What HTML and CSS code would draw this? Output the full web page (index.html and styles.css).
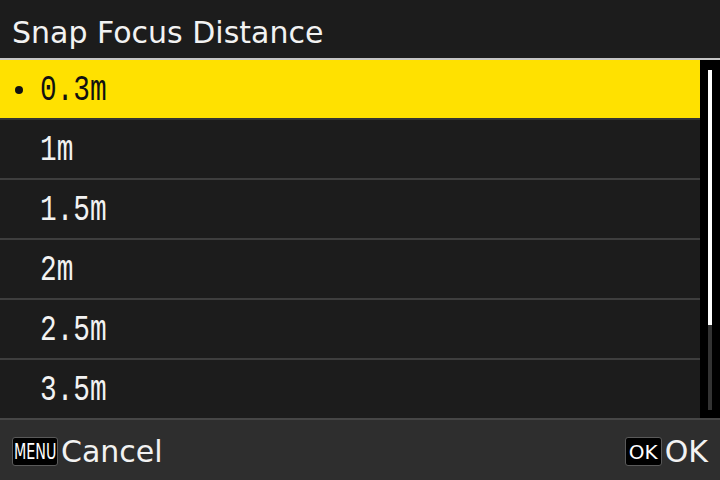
FILE: index.html
```html
<!DOCTYPE html>
<html lang="en">
<head>
  <meta charset="UTF-8">
  <meta name="viewport" content="width=device-width, initial-scale=1.0">
  <title>Snap Focus Distance</title>
  <link rel="stylesheet" href="styles.css">
</head>
<body>
  <div class="screen">
    <div class="title">Snap Focus Distance</div>

    <div class="menu-body">
      <ul class="options">
        <li class="option selected"><span class="dot"></span><span class="value">0.3m</span></li>
        <li class="option"><span class="value">1m</span></li>
        <li class="option"><span class="value">1.5m</span></li>
        <li class="option"><span class="value">2m</span></li>
        <li class="option"><span class="value">2.5m</span></li>
        <li class="option"><span class="value">3.5m</span></li>
      </ul>
      <div class="scrollbar">
        <div class="track">
          <div class="thumb"></div>
        </div>
      </div>
    </div>

    <div class="footer">
      <div class="action"><span class="key key-menu"><span class="key-text">MENU</span></span>Cancel</div>
      <div class="action"><span class="key key-ok">OK</span>OK</div>
    </div>
  </div>
</body>
</html>
```

FILE: styles.css
```css
body {
  margin: 0;
  padding: 0;
  background-color: #1c1c1c;
  font-family: 'DejaVu Sans', Verdana, sans-serif;
  color: #f2f2f2;
}

.screen {
  width: 720px;
  height: 480px;
  display: flex;
  flex-direction: column;
  overflow: hidden;
}

.title {
  height: 60px;
  flex-shrink: 0;
  box-sizing: border-box;
  padding: 7px 0 0 12px;
  line-height: 51px;
  font-size: 30px;
  background-color: #1c1c1c;
  border-bottom: 2px solid #c6c6c6;
}

.menu-body {
  display: flex;
  height: 358px;
  flex-shrink: 0;
}

.options {
  list-style: none;
  margin: 0;
  padding: 0;
  width: 700px;
}

.option {
  height: 58px;
  display: flex;
  align-items: center;
  position: relative;
  padding-left: 40px;
  border-bottom: 2px solid #3e3e3e;
  background-color: #1c1c1c;
}

.option:last-child {
  border-bottom: none;
}

.option.selected {
  background-color: #ffe100;
  color: #111;
  border-bottom-color: #333;
}

.dot {
  position: absolute;
  left: 15px;
  top: 26px;
  width: 8px;
  height: 8px;
  border-radius: 50%;
  background-color: #111;
}

.value {
  display: inline-block;
  font-family: 'Liberation Mono', monospace;
  font-size: 37px;
  line-height: 58px;
  padding-top: 2px;
  transform: scaleX(0.75);
  transform-origin: left center;
}

.scrollbar {
  width: 20px;
  background-color: #000;
  padding: 10px 0 8px 8px;
  box-sizing: border-box;
}

.track {
  width: 4px;
  height: 100%;
  background-color: #333;
}

.thumb {
  height: 255px;
  background-color: #fff;
}

.footer {
  flex: 1;
  display: flex;
  justify-content: space-between;
  align-items: center;
  padding: 3px 12px 0 12px;
  background-color: #2e2e2e;
  border-top: 2px solid #464646;
  font-size: 30px;
}

.action {
  display: flex;
  align-items: center;
  gap: 3px;
}

.key {
  display: inline-flex;
  align-items: center;
  justify-content: center;
  height: 29px;
  box-sizing: border-box;
  background-color: #000;
  border: 1px solid #5a5a5a;
  border-radius: 3px;
  font-size: 19px;
  color: #fff;
  overflow: hidden;
}

.key-menu {
  width: 46px;
}

.key-text {
  display: inline-block;
  font-size: 21px;
  transform: scaleX(0.68);
}

.key-ok {
  width: 37px;
  font-size: 20px;
}
```
